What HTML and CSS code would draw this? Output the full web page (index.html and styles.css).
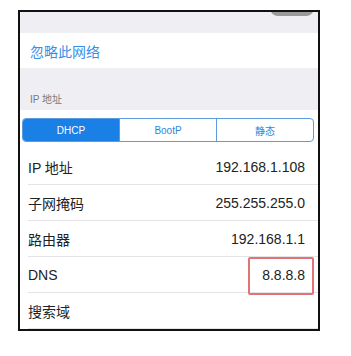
FILE: index.html
```html
<!DOCTYPE html>
<html lang="zh-CN">
<head>
  <meta charset="UTF-8" />
  <title>IP 设置</title>
  <link rel="stylesheet" href="styles.css">
</head>
<body>
  <div class="frame">
    <div class="top-strip">
      <span class="top-pill"></span>
    </div>

    <div class="forget-row">忽略此网络</div>

    <div class="section-head">IP 地址</div>

    <div class="ip-list">
      <div class="segment">
        <span class="seg-item active">DHCP</span>
        <span class="seg-item">BootP</span>
        <span class="seg-item">静态</span>
      </div>

      <div class="row">
        <span class="label">IP 地址</span>
        <span class="value">192.168.1.108</span>
      </div>
      <div class="row">
        <span class="label">子网掩码</span>
        <span class="value">255.255.255.0</span>
      </div>
      <div class="row">
        <span class="label">路由器</span>
        <span class="value">192.168.1.1</span>
      </div>
      <div class="row dns-row">
        <span class="label">DNS</span>
        <span class="value">8.8.8.8</span>
        <!-- red highlight box -->
        <span class="mark-box"></span>
      </div>
      <div class="row">
        <span class="label">搜索域</span>
        <span class="value"></span>
      </div>
    </div>
  </div>
</body>
</html>
```

FILE: styles.css
```css
* {
  box-sizing: border-box;
}

body {
  margin: 0;
  background: #ffffff;
  font-family: "Liberation Sans", "Noto Sans CJK SC", sans-serif;
  color: #222;
}

.frame {
  margin: 10px 0 0 18px;
  width: 302px;
  height: 321px;
  border: 2px solid #111;
  background: #ffffff;
  overflow: hidden;
}

.top-strip {
  position: relative;
  height: 21px;
  background: #eeeef3;
}

.top-pill {
  position: absolute;
  top: -4px;
  right: 4px;
  width: 44px;
  height: 8px;
  border-radius: 0 0 10px 10px;
  background: #9a9a9c;
}

.forget-row {
  height: 35px;
  display: flex;
  align-items: center;
  padding-left: 10px;
  font-size: 14px;
  color: #3a8ee6;
  background: #ffffff;
}

.section-head {
  height: 42px;
  display: flex;
  align-items: flex-end;
  padding: 0 0 4px 10px;
  font-size: 10px;
  color: #7a7a7e;
  background: #eeeef3;
}

.ip-list {
  padding-top: 8px;
  background: #ffffff;
}

.segment {
  display: flex;
  height: 24px;
  margin: 0 4px 7px 2px;
  border: 1px solid #5e9bdc;
  border-radius: 4px;
  overflow: hidden;
}

.seg-item {
  flex: 1;
  display: flex;
  align-items: center;
  justify-content: center;
  font-size: 10px;
  color: #2f86e0;
  border-left: 1px solid #5e9bdc;
}

.seg-item:first-child {
  border-left: none;
}

.seg-item.active {
  background: #1a80e6;
  color: #ffffff;
}

.row {
  position: relative;
  height: 36px;
  display: flex;
  align-items: center;
  justify-content: space-between;
  margin-left: 8px;
  padding-right: 13px;
  border-bottom: 1px solid #e4e4e8;
  font-size: 14px;
}

.dns-row {
  overflow: visible;
}

.mark-box {
  position: absolute;
  top: 0;
  right: 4px;
  width: 66px;
  height: 38px;
  border: 2px solid #e07474;
  border-radius: 2px;
}
```
